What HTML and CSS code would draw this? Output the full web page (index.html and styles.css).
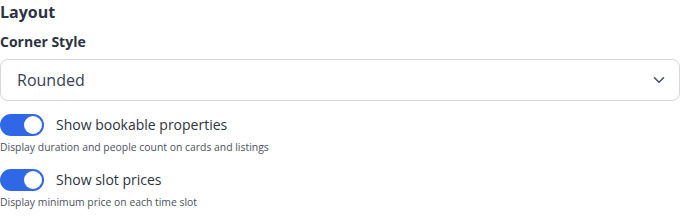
FILE: index.html
```html
<!DOCTYPE html>
<html lang="en">
<head>
    <meta charset="UTF-8">
    <title>Layout settings</title>
    <link rel="stylesheet" href="styles.css">
</head>
<body>
    <div class="section">
        <h3 class="section-title">Layout</h3>

        <div class="field">
            <label class="field-label" for="cornerStyle">Corner Style</label>
            <div class="select-wrap">
                <select id="cornerStyle" class="select">
                    <option>Rounded</option>
                    <option>Square</option>
                    <option>Pill</option>
                </select>
                <svg class="chevron" width="12" height="8" viewBox="0 0 12 8" fill="none">
                    <path d="M1.5 1.75 6 6.25l4.5-4.5" stroke="#4b5563" stroke-width="1.6" stroke-linecap="round" stroke-linejoin="round"/>
                </svg>
            </div>
        </div>

        <div class="toggle-row">
            <label class="toggle-line">
                <span class="switch on"><span class="knob"></span></span>
                <span class="toggle-label">Show bookable properties</span>
            </label>
            <p class="hint">Display duration and people count on cards and listings</p>
        </div>

        <div class="toggle-row">
            <label class="toggle-line">
                <span class="switch on"><span class="knob"></span></span>
                <span class="toggle-label">Show slot prices</span>
            </label>
            <p class="hint">Display minimum price on each time slot</p>
        </div>
    </div>
</body>
</html>
```

FILE: styles.css
```css
body {
    margin: 0;
    padding: 0;
    background: #fff;
    font-family: "Open Sans", Arial, sans-serif;
    color: #2d3342;
}

.section {
    width: 680px;
}

.section-title {
    margin: 0;
    padding-top: 1px;
    font-size: 16px;
    font-weight: 700;
    line-height: 22px;
    color: #2d3342;
}

.field {
    margin-top: 9px;
}

.field-label {
    display: block;
    font-size: 14px;
    font-weight: 700;
    line-height: 20px;
    color: #2d3342;
}

.select-wrap {
    position: relative;
    margin-top: 7px;
}

.select {
    display: block;
    width: 100%;
    height: 42px;
    padding: 0 40px 0 16px;
    box-sizing: border-box;
    border: 1px solid #d4d7dd;
    border-radius: 8px;
    background: #fff;
    font-family: inherit;
    font-size: 16px;
    color: #374151;
    appearance: none;
    -webkit-appearance: none;
}

.chevron {
    position: absolute;
    right: 15px;
    top: 17px;
    pointer-events: none;
}

.toggle-row {
    margin-top: 13px;
}

.toggle-row + .toggle-row {
    margin-top: 14px;
}

.toggle-line {
    display: flex;
    align-items: center;
    gap: 12px;
}

.switch {
    display: inline-flex;
    align-items: center;
    justify-content: flex-end;
    width: 44px;
    height: 22px;
    padding: 2px;
    box-sizing: border-box;
    border-radius: 11px;
    background: #e5e7eb;
}

.switch.on {
    background: #2f67e6;
}

.knob {
    width: 18px;
    height: 18px;
    border-radius: 50%;
    background: #fff;
}

.toggle-label {
    font-size: 14px;
    line-height: 22px;
    color: #2d3342;
}

.hint {
    margin: 4px 0 0;
    font-size: 10.4px;
    line-height: 15px;
    color: #4b5260;
}
```
